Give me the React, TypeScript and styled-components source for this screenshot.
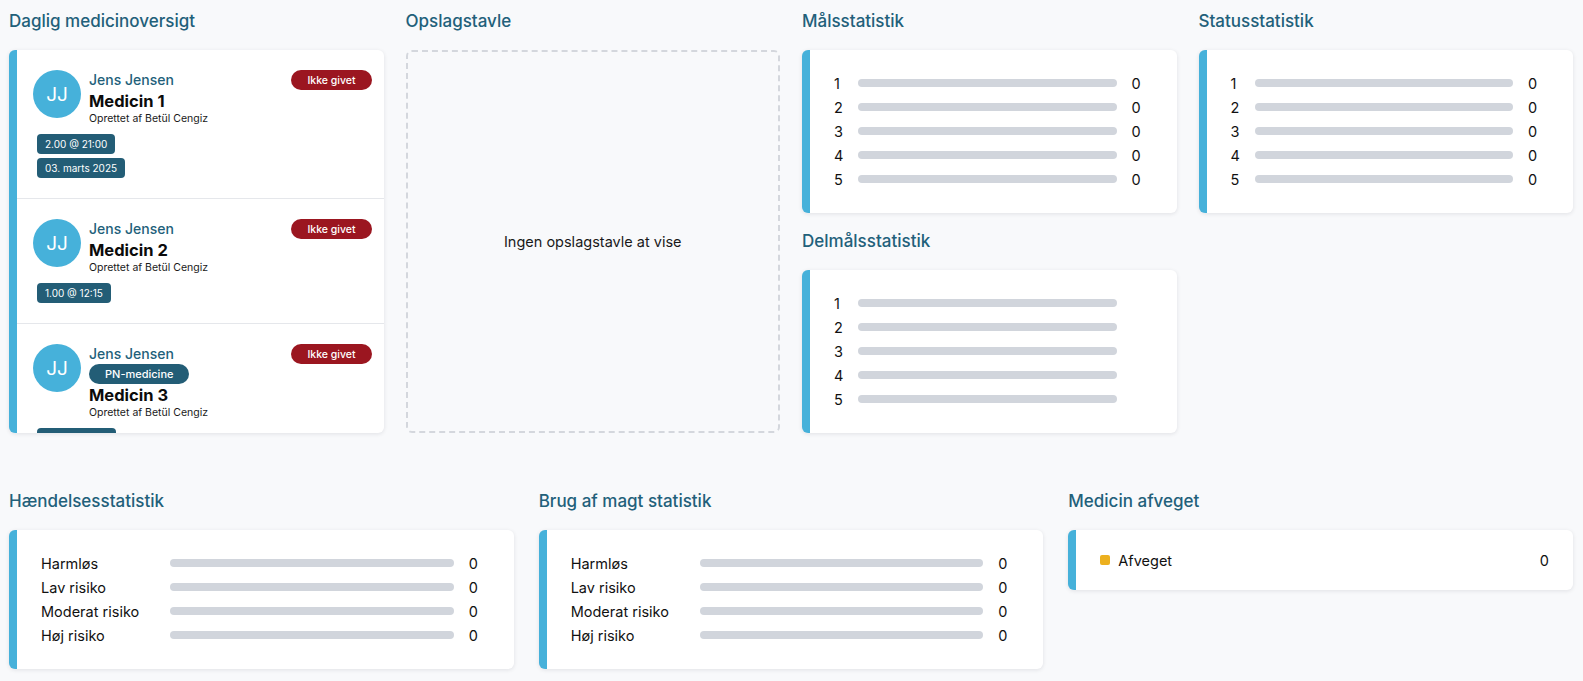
import styled, { createGlobalStyle } from "styled-components";

const GlobalStyle = createGlobalStyle`
    * {
        box-sizing: border-box;
    }
    body {
        margin: 0;
        background-color: #f8f9fb;
        font-family: Inter, "Noto Sans", "Liberation Sans", sans-serif;
        color: #111111;
    }
`;

const Page = styled.main`
    padding: 10px 10px 12px 9px;
    min-height: 100vh;
    background-color: #f8f9fb;
`;
const TopGrid = styled.div`
    display: grid;
    grid-template-columns: repeat(4, 1fr);
    column-gap: 22px;
    align-items: start;
`;
const BottomGrid = styled.div`
    display: grid;
    grid-template-columns: repeat(3, 1fr);
    column-gap: 25px;
    align-items: start;
    margin-top: 57px;
`;
const Column = styled.div`
    display: flex;
    flex-direction: column;
    gap: 17px;
    min-width: 0;
`;
const Section = styled.section`
    display: flex;
    flex-direction: column;
`;
const SectionTitle = styled.h2`
    margin: 0 0 18px;
    font-size: 17px;
    line-height: 22px;
    font-weight: 500;
    color: #22607a;
`;
const Card = styled.div`
    background-color: #ffffff;
    border-left: 8px solid #46b1da;
    border-radius: 6px;
    box-shadow: 0 1px 4px rgba(15, 23, 42, 0.1);
`;

/* medicine overview */
const MedList = styled(Card)`
    height: 383px;
    overflow: hidden;
`;
const MedItem = styled.div`
    padding: 20px 12px 20px 16px;
    border-bottom: 1px solid #e5e7eb;
`;
const MedHeader = styled.div`
    display: flex;
    align-items: flex-start;
    gap: 8px;
`;
const Avatar = styled.div`
    flex: none;
    width: 48px;
    height: 48px;
    border-radius: 50%;
    background-color: #46b1da;
    color: #ffffff;
    display: flex;
    align-items: center;
    justify-content: center;
    font-size: 19px;
`;
const MedInfo = styled.div`
    flex: 1;
    display: flex;
    flex-direction: column;
    align-items: flex-start;
`;
const PatientName = styled.div`
    font-size: 14px;
    line-height: 20px;
    font-weight: 500;
    color: #22607a;
`;
const MedName = styled.div`
    font-size: 16.5px;
    line-height: 22px;
    font-weight: 700;
    color: #0b0b0b;
`;
const CreatedBy = styled.div`
    font-size: 10.5px;
    line-height: 14px;
    color: #1a1a1a;
`;
const Pill = styled.span<{ $tone: "red" | "teal" }>`
    display: inline-flex;
    align-items: center;
    height: 20px;
    padding: 0 16px;
    border-radius: 999px;
    font-size: ${(p) => (p.$tone === "red" ? "10.5px" : "11px")};
    font-weight: 500;
    color: #ffffff;
    background-color: ${(p) => (p.$tone === "red" ? "#9b1620" : "#235d76")};
    white-space: nowrap;
`;
const DoseList = styled.div`
    display: flex;
    flex-direction: column;
    align-items: flex-start;
    gap: 4px;
    margin: 8px 0 0 4px;
`;
const DoseTag = styled.span`
    display: inline-flex;
    align-items: center;
    height: 20px;
    padding: 0 8px;
    border-radius: 4px;
    background-color: #235d76;
    color: #ffffff;
    font-size: 10px;
    white-space: nowrap;
`;

/* bulletin board */
const EmptyBoard = styled.div`
    height: 383px;
    border: 2px dashed #d4d7dd;
    border-radius: 6px;
    display: flex;
    align-items: center;
    justify-content: center;
    font-size: 14.5px;
    color: #1a1a1a;
`;

/* statistics */
const StatCard = styled(Card)`
    padding: 21px 24px 22px;
`;
const StatRow = styled.div<{ $labelWidth: number }>`
    display: grid;
    grid-template-columns: ${(p) => p.$labelWidth}px 1fr 36px;
    align-items: center;
    height: 24px;
`;
const StatLabel = styled.span`
    font-size: 14.5px;
    color: #111111;
    white-space: nowrap;
`;
const Bar = styled.div`
    height: 8px;
    border-radius: 4px;
    background-color: #d1d5dc;
`;
const StatValue = styled.span`
    padding-left: 15px;
    font-size: 14.5px;
    color: #111111;
`;
const LegendCard = styled(Card)`
    padding: 20px 24px;
`;
const LegendRow = styled.div`
    display: flex;
    align-items: center;
    height: 20px;
    gap: 8px;
    font-size: 14.5px;
`;
const Swatch = styled.span`
    width: 10px;
    height: 10px;
    border-radius: 2px;
    background-color: #ecb01f;
`;
const LegendValue = styled.span`
    margin-left: auto;
`;

type Medication = {
    patient: string;
    name: string;
    pn?: boolean;
    doses: string[];
};

const medications: Medication[] = [
    { patient: "Jens Jensen", name: "Medicin 1", doses: ["2.00 @ 21:00", "03. marts 2025"] },
    { patient: "Jens Jensen", name: "Medicin 2", doses: ["1.00 @ 12:15"] },
    { patient: "Jens Jensen", name: "Medicin 3", pn: true, doses: ["1.00 @ 08:00"] },
];

const initials = (name: string) =>
    name
        .split(" ")
        .map((part) => part[0])
        .join("");

function StatList({
    labels,
    labelWidth,
    showValues = true,
}: {
    labels: string[];
    labelWidth: number;
    showValues?: boolean;
}) {
    return (
        <StatCard>
            {labels.map((label) => (
                <StatRow key={label} $labelWidth={labelWidth}>
                    <StatLabel>{label}</StatLabel>
                    <Bar />
                    {showValues ? <StatValue>0</StatValue> : <span />}
                </StatRow>
            ))}
        </StatCard>
    );
}

const levels = ["1", "2", "3", "4", "5"];
const risks = ["Harmløs", "Lav risiko", "Moderat risiko", "Høj risiko"];

export default function App() {
    return (
        <>
            <GlobalStyle />
            <Page>
                <TopGrid>
                    <Column>
                        <Section>
                            <SectionTitle>Daglig medicinoversigt</SectionTitle>
                            <MedList>
                                {medications.map((med) => (
                                    <MedItem key={med.name}>
                                        <MedHeader>
                                            <Avatar>{initials(med.patient)}</Avatar>
                                            <MedInfo>
                                                <PatientName>{med.patient}</PatientName>
                                                {med.pn && <Pill $tone="teal">PN-medicine</Pill>}
                                                <MedName>{med.name}</MedName>
                                                <CreatedBy>Oprettet af Betül Cengiz</CreatedBy>
                                            </MedInfo>
                                            <Pill $tone="red">Ikke givet</Pill>
                                        </MedHeader>
                                        <DoseList>
                                            {med.doses.map((dose) => (
                                                <DoseTag key={dose}>{dose}</DoseTag>
                                            ))}
                                        </DoseList>
                                    </MedItem>
                                ))}
                            </MedList>
                        </Section>
                    </Column>
                    <Column>
                        <Section>
                            <SectionTitle>Opslagstavle</SectionTitle>
                            <EmptyBoard>Ingen opslagstavle at vise</EmptyBoard>
                        </Section>
                    </Column>
                    <Column>
                        <Section>
                            <SectionTitle>Målsstatistik</SectionTitle>
                            <StatList labels={levels} labelWidth={24} />
                        </Section>
                        <Section>
                            <SectionTitle>Delmålsstatistik</SectionTitle>
                            <StatList labels={levels} labelWidth={24} showValues={false} />
                        </Section>
                    </Column>
                    <Column>
                        <Section>
                            <SectionTitle>Statusstatistik</SectionTitle>
                            <StatList labels={levels} labelWidth={24} />
                        </Section>
                    </Column>
                </TopGrid>
                <BottomGrid>
                    <Section>
                        <SectionTitle>Hændelsesstatistik</SectionTitle>
                        <StatList labels={risks} labelWidth={129} />
                    </Section>
                    <Section>
                        <SectionTitle>Brug af magt statistik</SectionTitle>
                        <StatList labels={risks} labelWidth={129} />
                    </Section>
                    <Section>
                        <SectionTitle>Medicin afveget</SectionTitle>
                        <LegendCard>
                            <LegendRow>
                                <Swatch />
                                <span>Afveget</span>
                                <LegendValue>0</LegendValue>
                            </LegendRow>
                        </LegendCard>
                    </Section>
                </BottomGrid>
            </Page>
        </>
    );
}
